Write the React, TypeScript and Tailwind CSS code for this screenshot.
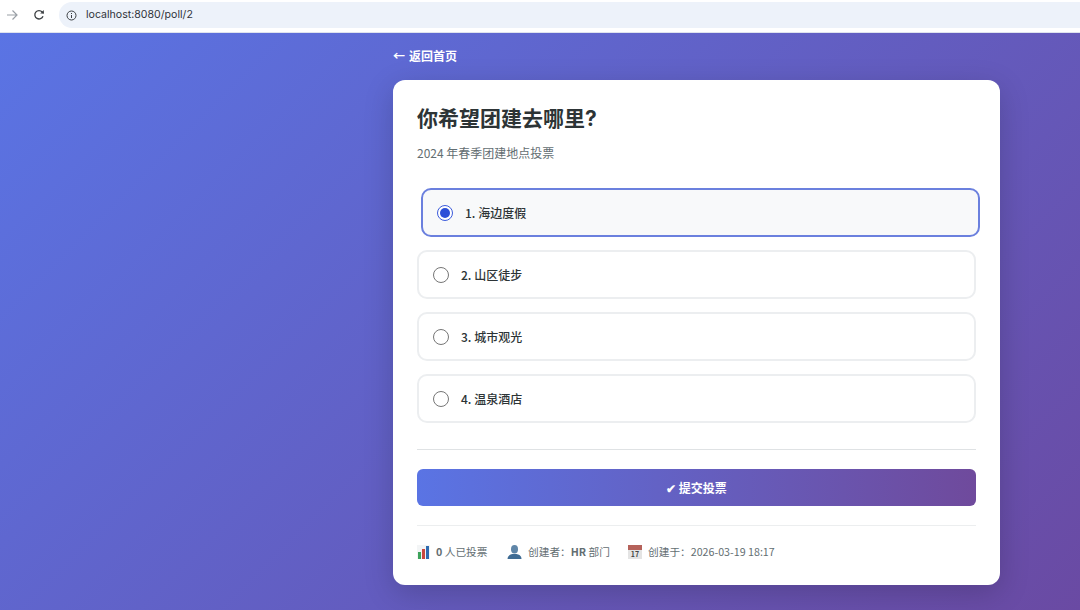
function Arrow() {
  return (
    <svg width="12" height="12" viewBox="0 0 12 12" fill="none" stroke="#9aa0a6" strokeWidth="1.2">
      <path d="M1 6h10M6.5 1.5L11 6l-4.5 4.5" />
    </svg>
  );
}

function Reload() {
  return (
    <svg width="12" height="12" viewBox="0 0 12 12" fill="none" stroke="#3c4043" strokeWidth="1.3">
      <path d="M10 7.2A4.2 4.2 0 1 1 9.2 3L10.6 4.4" />
      <path d="M10.8 1v3.6H7.2z" fill="#3c4043" stroke="none" />
    </svg>
  );
}

function Info() {
  return (
    <svg width="11" height="11" viewBox="0 0 11 11" fill="none" stroke="#3c4043" strokeWidth="1">
      <circle cx="5.5" cy="5.5" r="4.5" />
      <path d="M5.5 5v3M5.5 3v1" />
    </svg>
  );
}

function BarsIcon() {
  return (
    <svg width="13" height="14" viewBox="0 0 13 14" className="shrink-0">
      <rect x="0" y="0" width="13" height="14" fill="#f3f5f6" />
      <rect x="1" y="7" width="3" height="7" fill="#3da35a" />
      <rect x="5" y="4" width="3" height="10" fill="#c9483f" />
      <rect x="9" y="1" width="3" height="13" fill="#2f6bb0" />
    </svg>
  );
}

function PersonIcon() {
  return (
    <svg width="15" height="14" viewBox="0 0 15 14" className="shrink-0">
      <ellipse cx="7.5" cy="4.2" rx="3.5" ry="4.2" fill="#5f86a8" />
      <path d="M0.5 14c0-3.4 3-4.6 5-5h4c2 .4 5 1.6 5 5z" fill="#3f6c94" />
    </svg>
  );
}

function CalendarIcon() {
  return (
    <div className="relative w-[14px] h-[14px] shrink-0 bg-[#e4e4e4] overflow-hidden">
      <div className="h-[5px] bg-[#b5625a]" />
      <div className="text-center text-[7px] leading-[9px] font-bold text-[#444]">17</div>
    </div>
  );
}

function Option({ n, label, selected }: { n: number; label: string; selected?: boolean }) {
  return (
    <div
      className={
        selected
          ? "h-[49px] flex items-center gap-[12px] px-[14px] rounded-[10px] border-2 border-[#6b80de] bg-[#f8f9fa] translate-x-[4px]"
          : "h-[49px] flex items-center gap-[12px] px-[14px] rounded-[10px] border-2 border-[#eceef0] bg-white"
      }
    >
      {selected ? (
        <div className="w-[16px] h-[16px] rounded-full border border-[#3b5bdb] flex items-center justify-center bg-white shrink-0">
          <div className="w-[10px] h-[10px] rounded-full bg-[#2c4fd8]" />
        </div>
      ) : (
        <div className="w-[16px] h-[16px] rounded-full border border-[#767676] bg-white shrink-0" />
      )}
      <span className="text-[12px] font-medium text-[#2d3436]">
        {n}. {label}
      </span>
    </div>
  );
}

export default function App() {
  return (
    <div className="w-[1080px] h-[610px] overflow-hidden flex flex-col font-['Noto_Sans_CJK_SC','Noto_Sans',sans-serif]">
      <header className="h-[33px] pb-[2px] bg-white flex items-center shrink-0 border-b border-[#dfe3ee]">
        <div className="w-[24px] pl-[6px] flex justify-start"><Arrow /></div>
        <div className="w-[35px] pl-[9px]"><Reload /></div>
        <div className="flex-1 h-[26px] bg-[#edf2fa] rounded-l-full flex items-center gap-[9px] pl-[7px]">
          <Info />
          <span className="text-[10.6px] text-[#30343a] font-['Inter',sans-serif]">localhost:8080/poll/2</span>
        </div>
      </header>
      <main className="flex-1 bg-[linear-gradient(135deg,#5a74e4_0%,#6a4aa3_100%)] pl-[393px] pt-[13px]">
        <div className="h-[20px] flex items-center gap-[4px] text-[12px] font-semibold text-white">
          <span>←</span>
          <span>返回首页</span>
        </div>
        <div className="mt-[14px] w-[607px] h-[505px] bg-white rounded-[12px] shadow-[0_8px_30px_rgba(0,0,0,0.18)] px-[24px] pt-[24px]">
          <h1 className="h-[30px] flex items-center text-[21px] font-bold text-[#2d3436] font-['Inter','Noto_Sans_CJK_SC',sans-serif]">你希望团建去哪里?</h1>
          <p className="mt-[10px] h-[18px] flex items-center text-[12px] text-[#636e72]">2024 年春季团建地点投票</p>
          <div className="mt-[26px] flex flex-col gap-[13px]">
            <Option n={1} label="海边度假" selected />
            <Option n={2} label="山区徒步" />
            <Option n={3} label="城市观光" />
            <Option n={4} label="温泉酒店" />
          </div>
          <div className="mt-[26px] h-[1px] bg-[#dfe2e4]" />
          <div className="mt-[19px] h-[37px] rounded-[6px] bg-[linear-gradient(90deg,#5a74e4_0%,#6f4a9c_100%)] flex items-center justify-center text-[12px] font-bold text-white">
            ✔ 提交投票
          </div>
          <div className="mt-[19px] h-[1px] bg-[#eceeef]" />
          <div className="mt-[18px] flex items-center text-[10.7px] text-[#636e72]">
            <div className="flex items-center gap-[6px] w-[90px]">
              <BarsIcon />
              <span><b className="font-bold">0</b> 人已投票</span>
            </div>
            <div className="flex items-center gap-[6px] w-[121px]">
              <PersonIcon />
              <span>创建者：<b className="font-bold">HR</b> 部门</span>
            </div>
            <div className="flex items-center gap-[6px]">
              <CalendarIcon />
              <span>创建于：2026-03-19 18:17</span>
            </div>
          </div>
        </div>
      </main>
    </div>
  );
}
